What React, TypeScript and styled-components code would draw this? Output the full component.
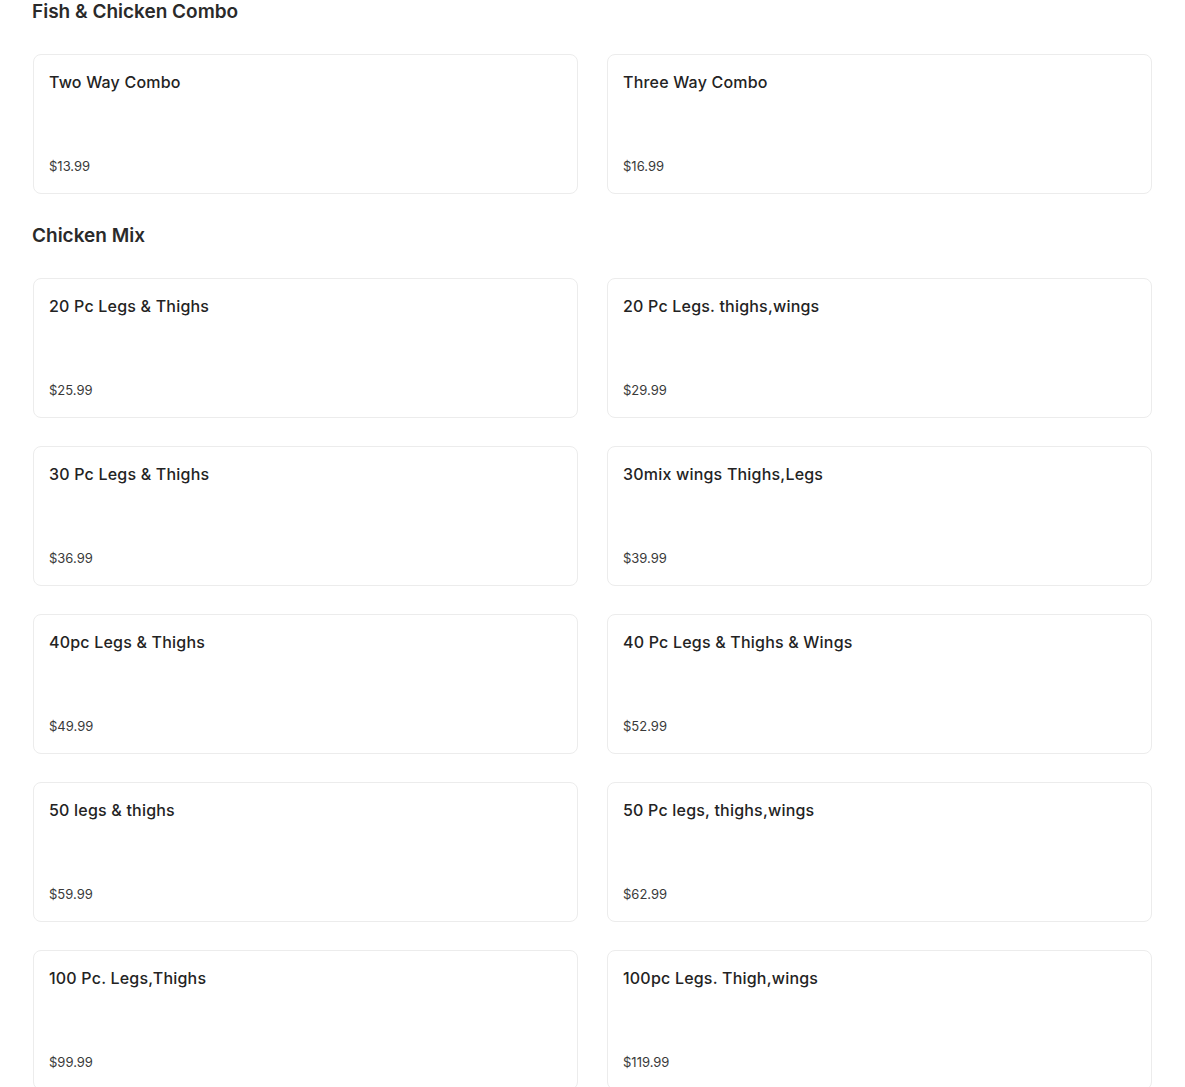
import React from 'react';
import styled, { createGlobalStyle } from 'styled-components';

const GlobalStyle = createGlobalStyle`
  body {
    margin: 0;
    background: #ffffff;
    font-family: "Inter", "Noto Sans", sans-serif;
    color: #222222;
  }
`;

const Page = styled.div`
  padding: 0 33px;
`;

const Section = styled.section`
  margin-bottom: 30px;
`;

const SectionTitle = styled.h2`
  margin: 0 0 30px -1px;
  font-size: 19px;
  line-height: 24px;
  font-weight: 600;
  color: #2a2a2a;
`;

const ItemGrid = styled.div`
  display: grid;
  grid-template-columns: 1fr 1fr;
  column-gap: 29px;
  row-gap: 28px;
`;

const Card = styled.div`
  height: 140px;
  box-sizing: border-box;
  border: 1px solid #ececec;
  border-radius: 8px;
  padding: 15px 15px 15px 15px;
  display: flex;
  flex-direction: column;
  justify-content: space-between;
  background: #fff;
`;

const ItemName = styled.div`
  font-size: 16px;
  line-height: 24px;
  font-weight: 500;
  letter-spacing: 0.2px;
  color: #232323;
`;

const Price = styled.div`
  font-size: 13px;
  line-height: 24px;
  font-weight: 400;
  color: #3a3a3a;
`;

type Item = { name: string; price: string };

const sections: { title: string; items: Item[] }[] = [
  {
    title: 'Fish & Chicken Combo',
    items: [
      { name: 'Two Way Combo', price: '$13.99' },
      { name: 'Three Way Combo', price: '$16.99' },
    ],
  },
  {
    title: 'Chicken Mix',
    items: [
      { name: '20 Pc Legs & Thighs', price: '$25.99' },
      { name: '20 Pc Legs. thighs,wings', price: '$29.99' },
      { name: '30 Pc Legs & Thighs', price: '$36.99' },
      { name: '30mix wings Thighs,Legs', price: '$39.99' },
      { name: '40pc Legs & Thighs', price: '$49.99' },
      { name: '40 Pc Legs & Thighs & Wings', price: '$52.99' },
      { name: '50 legs & thighs', price: '$59.99' },
      { name: '50 Pc legs, thighs,wings', price: '$62.99' },
      { name: '100 Pc. Legs,Thighs', price: '$99.99' },
      { name: '100pc Legs. Thigh,wings', price: '$119.99' },
    ],
  },
];

const App = () => {
  return (
    <>
      <GlobalStyle />
      <Page>
        {sections.map((section) => (
          <Section key={section.title}>
            <SectionTitle>{section.title}</SectionTitle>
            <ItemGrid>
              {section.items.map((item) => (
                <Card key={item.name}>
                  <ItemName>{item.name}</ItemName>
                  <Price>{item.price}</Price>
                </Card>
              ))}
            </ItemGrid>
          </Section>
        ))}
      </Page>
    </>
  );
};

export default App;
